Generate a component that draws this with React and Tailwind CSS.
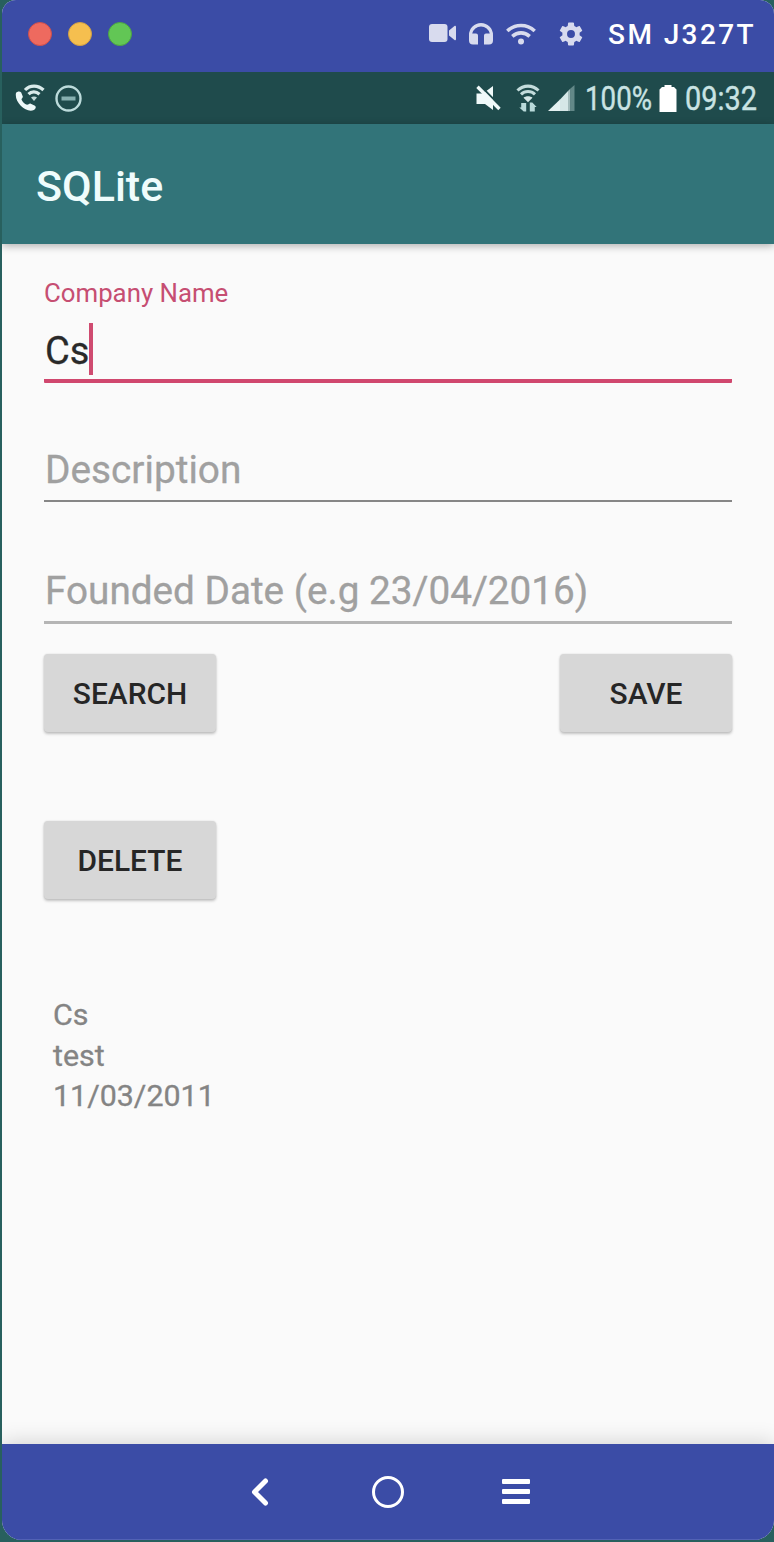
const StatusIconCall = () => (
  <svg className="mt-[-2px] ml-[-1px] mr-px block h-[30px] w-[32px]" viewBox="0 0 32 30" fill="none" stroke="#d9ebeb">
    <path d="M2 11c1.200-1.800 4-2 5.200-.6l1.600 4.200c.2 1.200-1.300 2-1.300 3 1 2.500 3 4.400 5.500 5.200 1.200.2 2-1.400 3.300-1.300l4.700 2.200c1.500 1 .6 3.400-1.200 4.300C12.500 31.500 0 20.500 2 11z" fill="#eef9f9" stroke="none" />
    <path d="M11 8c5-5.300 13-5.300 18.500 0M14.500 12.200c3-3 7.600-3 11 0" strokeWidth="3.200" />
    <path d="M17 15.500c1.500-1.500 4.500-1.500 6 0l-3 3.500z" fill="#c2dada" stroke="none" />
  </svg>
);

const SignalIcon = () => (
  <svg className="block h-[26px] w-[28px]" viewBox="0 0 28 26">
    <path d="M0 26 12 14.500V26z" fill="#e4f1f1" />
    <path d="M12 14.500 20 6v20h-8z" fill="#d6e7e7" />
    <path d="M20 6l2.500-2.500V26H20z" fill="#a4bcbc" />
    <path d="M22.500 3.500 26.500 0v26h-4z" fill="#638888" />
  </svg>
);

const DataWifiIcon = () => (
  <svg className="block h-[28px] w-[26px]" viewBox="0 0 26 28" fill="none" stroke="#c3dcdc">
    <path d="M2.500 6.500c6-5.800 15-5.800 21 0M6 10.300c4-3.700 10-3.700 14 0" strokeWidth="3.100" />
    <path d="M8.500 13.800c2.200-2 6.800-2 9 0l-4.500 4.500z" fill="#d5e7e7" stroke="none" />
    <path d="M8.700 27.500 4.300 23.500h1.900v-4.500h5v8.500zM17.300 18.500l4.400 4.500h-1.900v4.500h-5v-9z" fill="#b9dada" stroke="none" />
  </svg>
);

const MuteIcon = () => (
  <svg className="block h-[26px] w-[26px]" viewBox="0 0 26 26">
    <path d="M1.500 8.500H8l10-7.500V25l-8-6H1.500z" fill="#f0fafa" />
    <path d="M4.300-.3 26 21.700" stroke="#1f4b4c" strokeWidth="2" />
    <path d="M2.500 1.800 24.500 24" stroke="#f0fafa" strokeWidth="3.400" />
  </svg>
);

const TitleBar = () => (
  <header className="flex h-[72px] items-center justify-between bg-[#3b4ca6] pl-[26px] pr-[18px]">
    <div className="mt-[-4px] flex gap-4">
      <span className="size-6 rounded-full border border-[#cf4f4c] bg-[#ee6a5f]" />
      <span className="size-6 rounded-full border border-[#d3a044] bg-[#f5bf4f]" />
      <span className="size-6 rounded-full border border-[#4ca443] bg-[#62c655]" />
    </div>
    <div className="flex items-center text-[#d8dbee]">
      <svg className="mt-[-6px] mr-[13px] block h-[18px] w-[27px]" viewBox="0 0 27 18" fill="currentColor">
        <rect width="18.500" height="18" rx="3" />
        <path d="M20 6.500 25.500 2c.8-.6 1.500-.2 1.500.8v12.400c0 1-.7 1.400-1.500.8L20 11.500z" />
      </svg>
      <svg className="mt-[-5px] mr-[13px] block h-[22px] w-[24px]" viewBox="0 0 24 22" fill="currentColor">
        <path d="M0 12a12 12 0 0 1 24 0v5.500a4 4 0 0 1-4 4h-5V12.500q0-2 2-2h3.800a9 9 0 0 0-17.600 0H7q2 0 2 2v9H4a4 4 0 0 1-4-4z" />
      </svg>
      <svg className="mt-[-5px] mr-[23px] block h-[22px] w-[30px]" viewBox="0 0 30 22" fill="none" stroke="currentColor" strokeWidth="3.600">
        <path d="M1.300 8c8-7.300 19.400-7.300 27.400 0M6.300 13.300c5.200-4.600 12.200-4.600 17.400 0" />
        <circle cx="15" cy="18.500" r="3" fill="currentColor" stroke="none" />
      </svg>
      <svg className="mt-[-5px] mr-[25px] block size-[24px]" viewBox="2 2 20 20" fill="currentColor">
        <path d="M19.140 12.940c.04-.3.06-.61.06-.94s-.02-.64-.07-.94l2.030-1.580a.49.49 0 0 0 .12-.61l-1.920-3.320a.488.488 0 0 0-.59-.22l-2.390.96c-.5-.38-1.030-.7-1.620-.94l-.36-2.540a.484.484 0 0 0-.48-.41h-3.840c-.24 0-.43.17-.47.41l-.36 2.540c-.59.24-1.130.57-1.620.94l-2.390-.96a.48.48 0 0 0-.59.22L2.740 8.870a.47.47 0 0 0 .12.61l2.030 1.580c-.05.3-.09.63-.09.94s.02.64.07.94l-2.030 1.580a.49.49 0 0 0-.12.61l1.920 3.320c.12.22.37.29.59.22l2.390-.96c.5.38 1.030.7 1.620.94l.36 2.540c.05.24.24.41.48.41h3.840c.24 0 .44-.17.47-.41l.36-2.540c.59-.24 1.130-.56 1.620-.94l2.390.96c.22.08.47 0 .59-.22l1.920-3.320a.47.47 0 0 0-.12-.61zM12 15.300a3.300 3.300 0 1 1 0-6.600 3.300 3.300 0 0 1 0 6.600" />
      </svg>
      <span className="mt-[-3px] text-[28px] leading-8 font-medium tracking-[2.400px] whitespace-nowrap text-white">SM J327T</span>
    </div>
  </header>
);

const StatusBar = () => (
  <div className="flex h-[52px] items-center justify-between bg-[#1f4b4c] pl-[13px] pr-[17px] text-[#c9e3e3]">
    <div className="flex items-center gap-[8px]">
      <StatusIconCall />
      <svg className="block size-[27px]" viewBox="0 0 27 27" fill="none" stroke="#bcdbdb" strokeWidth="2.400">
        <circle cx="13.500" cy="13.500" r="12" />
        <path d="M6.500 13.500h14" strokeWidth="4" stroke="#86b0b0" />
      </svg>
    </div>
    <div className="flex items-center">
      <MuteIcon />
      <span className="ml-[14px]"><DataWifiIcon /></span>
      <span className="ml-[7px]"><SignalIcon /></span>
      <span className="mt-px ml-[9px] w-[70px] text-[33px] leading-9 whitespace-nowrap [-webkit-text-stroke:0.4px_#c9e3e3]"><span className="block w-max origin-left scale-x-[.84]">100%</span></span>
      <svg className="ml-[4px] block h-[27px] w-[18px]" viewBox="0 0 17 27" fill="#fff">
        <path d="M5 0h7v2h2.500L17 4.500V27H0V4.500L2.500 2H5z" />
      </svg>
      <span className="mt-px ml-[8px] w-[72px] text-[33px] leading-9 whitespace-nowrap [-webkit-text-stroke:0.4px_#c9e3e3]"><span className="block w-max origin-left scale-x-[.875]">09:32</span></span>
    </div>
  </div>
);

const ActionButton = ({ children }) => (
  <button className="h-[78px] w-[172px] rounded-[4px] bg-[#d7d7d7] pt-[3px] text-[29.900px] font-medium text-[#262626] shadow-[0_2px_3px_rgba(0,0,0,0.22),0_0_2px_rgba(0,0,0,0.12)]">{children}</button>
);

export default function App() {
  return (
    <div className="h-[1542px] w-[774px] bg-[#28605e] pb-[2px] pl-[2px] font-['Roboto',sans-serif]">
      <div className="flex h-[1540px] flex-col overflow-hidden rounded-t-[14px] rounded-b-[20px] bg-[#fafafa]">
        <TitleBar />
        <StatusBar />
        <div className="z-10 flex h-[120px] shrink-0 items-center bg-[#327479] pl-[34px] shadow-[0_2px_8px_rgba(0,0,0,0.3)]">
          <h1 className="mt-[3px] text-[43px] leading-[50px] font-medium text-[#effcfc]">SQLite</h1>
        </div>
        <main className="flex flex-1 flex-col pl-[42px] pr-[42px]">
          <label className="mt-[33px] h-[33px] text-[25.800px] leading-[32px] text-[#c64e72]">Company Name</label>
          <div className="mt-[13px] flex h-[60px] items-start rounded-[1px] border-b-4 border-[#d0476e] pl-px text-[38px] leading-[56px] text-[#292929] [-webkit-text-stroke:0.3px_#292929]">
            <span>Cs</span>
            <span className="h-[52px] w-[4px] bg-[#cf4b70]" />
          </div>
          <div className="mt-[58px] h-[61px] border-b-2 border-[#868686] pl-px text-[38.800px] leading-[57px] text-[#a0a0a0] [-webkit-text-stroke:0.3px_#a0a0a0]">Description</div>
          <div className="mt-[60px] h-[62px] border-b-3 border-[#b5b5b5] pl-px text-[38.700px] leading-[57px] whitespace-nowrap text-[#a0a0a0] [-webkit-text-stroke:0.3px_#a0a0a0]">Founded Date (e.g 23/04/2016)</div>
          <div className="mt-[30px] flex justify-between">
            <ActionButton>SEARCH</ActionButton>
            <ActionButton>SAVE</ActionButton>
          </div>
          <div className="mt-[89px] flex">
            <ActionButton>DELETE</ActionButton>
          </div>
          <div className="mt-[96px] pl-[9px] text-[30.400px] leading-[40.600px] text-[#848484] [-webkit-text-stroke:0.3px_#848484]">
            <p>Cs</p>
            <p>test</p>
            <p>11/03/2011</p>
          </div>
        </main>
        <nav className="flex h-[96px] shrink-0 items-center border-b border-[#5262b5] bg-[#3b4ca6] pl-[248px] shadow-[0_-2px_20px_rgba(0,0,0,0.16)]">
          <svg className="block h-[28px] w-[20px]" viewBox="0 0 20 28" fill="none" stroke="#fff" strokeWidth="5" strokeLinecap="round" strokeLinejoin="round">
            <path d="M15.500 3 4.500 14l11 11" />
          </svg>
          <span className="ml-[102px] size-[32px] rounded-full border-3 border-white" />
          <span className="ml-[98px] flex w-[28px] flex-col gap-[5px]">
            <span className="h-[5px] rounded-[1px] bg-white" />
            <span className="h-[5px] rounded-[1px] bg-white" />
            <span className="h-[5px] rounded-[1px] bg-white" />
          </span>
        </nav>
      </div>
    </div>
  );
}
